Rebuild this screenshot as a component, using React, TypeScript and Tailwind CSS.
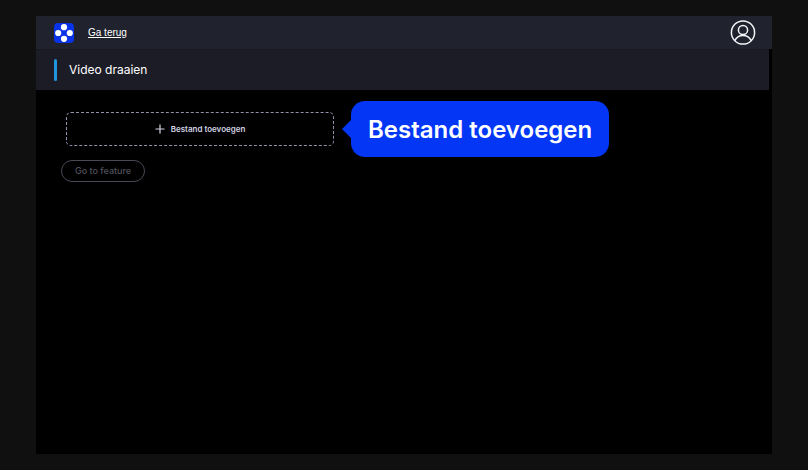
const Logo = () => (
  <svg viewBox="0 0 20 20" className="size-5" aria-hidden="true">
    <rect width="20" height="20" rx="4" fill="#0a32e6" />
    <g fill="#ffffff">
      <circle cx="10" cy="4.2" r="3.1" />
      <circle cx="4.2" cy="10" r="3.1" />
      <circle cx="15.8" cy="10" r="3.1" />
      <circle cx="10" cy="15.8" r="3.1" />
    </g>
  </svg>
);

const ProfileIcon = () => (
  <svg
    viewBox="0 0 26 26"
    className="size-[26px]"
    fill="none"
    stroke="#f4f4f8"
    strokeWidth="1.5"
    aria-hidden="true"
  >
    <circle cx="13" cy="12.5" r="11.6" />
    <circle cx="13" cy="10" r="4.6" />
    <path d="M4.800 20.600c1.500-3.400 4.600-5.200 8.200-5.200s6.700 1.800 8.200 5.200" />
  </svg>
);

const PlusIcon = () => (
  <svg
    viewBox="0 0 10 10"
    className="size-[10px]"
    stroke="#d4d4e6"
    strokeWidth="1.2"
    aria-hidden="true"
  >
    <path d="M5 0.500v9M0.500 5h9" />
  </svg>
);

const App = () => {
  return (
    <div className="flex min-h-screen bg-[#101010] px-9 py-4 font-['Inter',sans-serif] text-white">
      <div className="flex-1 bg-black">
        {/* Top bar */}
        <header className="flex h-[33px] items-center bg-[#20222e] pr-4 pl-[18px]">
          <Logo />
          <a
            href="#"
            className="ml-[14px] font-['Liberation_Sans',Arial,sans-serif] text-[10px] leading-4 underline"
          >
            Ga terug
          </a>
          <button type="button" aria-label="Profiel" className="ml-auto">
            <ProfileIcon />
          </button>
        </header>

        {/* Page title */}
        <div className="mr-[3px] flex h-[41px] items-center border-t border-[#181820] bg-[#1c1c26] pl-[18px]">
          <span className="h-[22px] w-[3px] rounded-full bg-[#2196dc]" />
          <h1 className="ml-3 text-[12px] leading-4">Video draaien</h1>
        </div>

        <main className="pt-[11px]">
          <div className="flex items-center pl-[30px]">
            <button
              type="button"
              className="flex h-[34px] w-[268px] items-center justify-center gap-[6px] rounded-[5px] border border-dashed border-[#9292ac] text-[8px] leading-3 font-semibold text-[#d4d4e6]"
            >
              <PlusIcon />
              Bestand toevoegen
            </button>

            {/* Callout */}
            <div className="ml-2 flex items-center">
              <svg viewBox="0 0 9 18" className="h-[18px] w-[9px]" aria-hidden="true">
                <path d="M9 0v18L0 9z" fill="#0436f5" />
              </svg>
              <div className="flex h-14 items-center rounded-[14px] bg-[#0436f5] px-[17px] pt-[2px] text-[24px] leading-8 font-semibold whitespace-nowrap">
                Bestand toevoegen
              </div>
            </div>
          </div>

          <button
            type="button"
            disabled
            className="mt-[3px] ml-[25px] flex h-[22px] items-center rounded-full border border-[#494956] px-[13px] text-[9px] leading-3 font-medium text-[#50505c]"
          >
            Go to feature
          </button>
        </main>
      </div>
    </div>
  );
};

export default App;
